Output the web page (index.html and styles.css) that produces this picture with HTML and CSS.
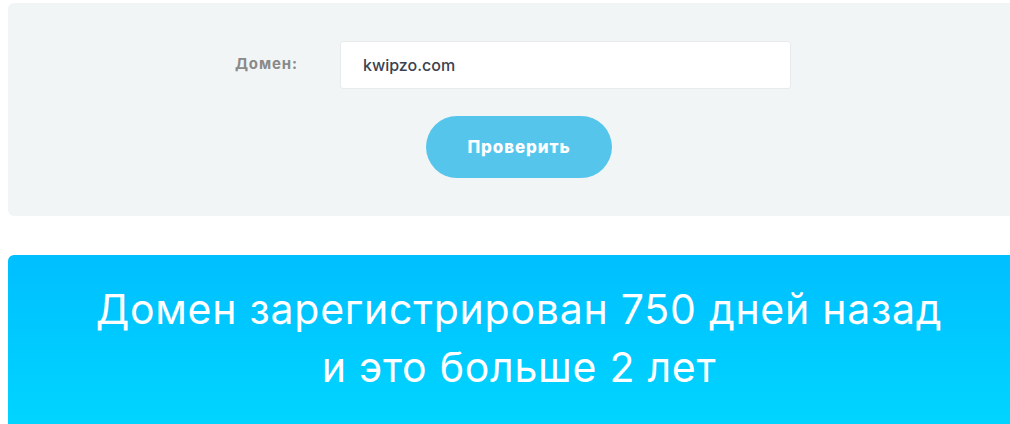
FILE: index.html
```html
<!DOCTYPE html>
<html lang="ru">
<head>
<meta charset="utf-8">
<title>Проверка домена</title>
<link rel="stylesheet" href="styles.css">
</head>
<body>
<div class="page">
  <section class="panel">
    <form class="check-form">
      <div class="form-row">
        <label class="form-label" for="domain">Домен:</label>
        <div class="form-input" id="domain">kwipzo.com</div>
      </div>
      <div class="form-actions">
        <button type="button" class="btn-check">Проверить</button>
      </div>
    </form>
  </section>
  <section class="result">
    <h2 class="result-title">Домен зарегистрирован 750 дней назад<br>и это больше 2 лет</h2>
  </section>
</div>
</body>
</html>
```

FILE: styles.css
```css
html, body {
  margin: 0;
  padding: 0;
  overflow: hidden;
  background: #ffffff;
}

.page {
  width: 1022px;
  padding: 3px 0 0 8px;
  font-family: "Inter", "Open Sans", sans-serif;
}

.panel {
  background: #f2f5f6;
  border-radius: 6px;
  height: 213px;
  box-sizing: border-box;
  padding-top: 38px;
}

.check-form {
  display: flex;
  flex-direction: column;
}

.form-row {
  display: grid;
  grid-template-columns: 332px 451px;
  align-items: center;
}

.form-label {
  justify-self: end;
  padding-right: 42px;
  font-size: 15px;
  font-weight: 700;
  letter-spacing: 0.9px;
  color: #8a8a8a;
  margin-top: -4px;
}

.form-input {
  height: 48px;
  box-sizing: border-box;
  background: #ffffff;
  border: 1px solid #e8ebee;
  border-radius: 3px;
  padding: 0 22px;
  display: flex;
  align-items: center;
  font-size: 16px;
  font-weight: 500;
  color: #3b4150;
}

.form-actions {
  display: flex;
  justify-content: center;
  margin-top: 27px;
}

.btn-check {
  width: 186px;
  height: 62px;
  border: none;
  border-radius: 31px;
  background: #56c5ec;
  color: #ffffff;
  font-family: inherit;
  font-size: 17px;
  font-weight: 800;
  letter-spacing: 0.9px;
  cursor: pointer;
}

.result {
  margin-top: 39px;
  height: 180px;
  border-radius: 6px;
  background: linear-gradient(180deg, #00bfff 0%, #00d6ff 100%);
  padding-top: 25px;
  box-sizing: border-box;
}

.result-title {
  margin: 0;
  text-align: center;
  color: #ffffff;
  font-size: 41px;
  font-weight: 400;
  letter-spacing: 0.75px;
  line-height: 58px;
}
```
